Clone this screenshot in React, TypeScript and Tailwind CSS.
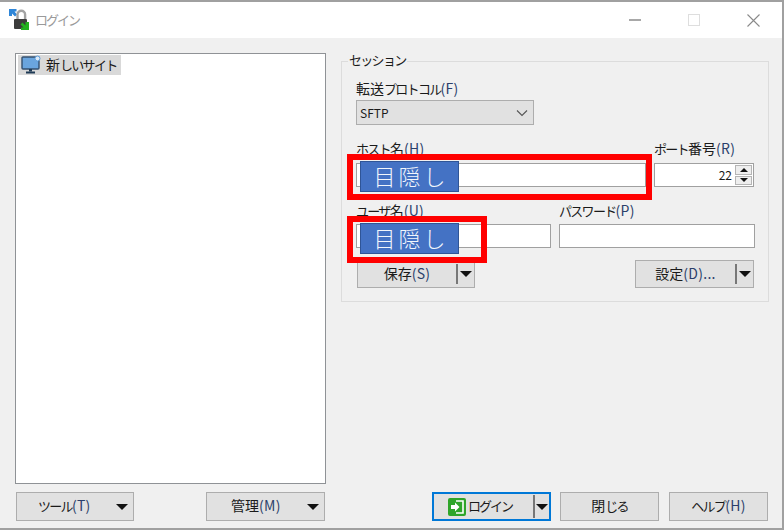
const FONT = "font-['Noto_Sans_CJK_JP','Noto_Sans',sans-serif]";

function Caret() {
  return <span className="block w-0 h-0 border-x-[6px] border-x-transparent border-t-[6px] border-t-[#111]" />;
}

function Hotkey({ children }: { children: string }) {
  return <span className="text-[14px] text-[#2b3f6b] tracking-[0.3px]">{children}</span>;
}

// kanji run wider than the kana around it
function K({ children }: { children: string }) {
  return <span className="text-[14px] tracking-normal">{children}</span>;
}

function Redacted() {
  return (
    <div className="w-[99px] h-[31px] bg-[#4472c4] border border-[#2f5597] text-[#f2f6fc] text-[22px] leading-[26px] tracking-[3px] pl-[3px] text-center font-light">
      目隠し
    </div>
  );
}

function LockIcon() {
  return (
    <svg width="22" height="22" viewBox="0 0 22 22">
      <path d="M0 0h7.500v2.500H5.500l2.500 3-2 2-3-3v2.500H0z" fill="#2f86d8" />
      <path d="M8.500 10V5.500a3.800 3.800 0 0 1 7.600 0V10" fill="none" stroke="#a3a3a3" strokeWidth="2.4" />
      <rect x="5" y="10" width="13" height="10" rx="1" fill="#3c3c3c" />
      <path d="M20 13v8h-8v-2.500h2.500l-3-3 2-2 3 3V13z" fill="#22b11f" />
    </svg>
  );
}

function SiteIcon() {
  return (
    <svg width="20" height="20" viewBox="0 0 20 20">
      <rect x="1" y="2" width="17" height="12" rx="1" fill="#6aa5de" stroke="#34506f" strokeWidth="1.4" />
      <circle cx="16.500" cy="3.500" r="2.500" fill="#dbe9f7" stroke="#5b9bd8" />
      <rect x="8" y="14" width="3" height="2.500" fill="#1f3a55" />
      <rect x="5" y="16.500" width="9" height="2" fill="#1f3a55" />
    </svg>
  );
}

function LoginIcon() {
  return (
    <svg width="18" height="18" viewBox="0 0 18 18">
      <rect width="18" height="18" rx="2" fill="#2ea52a" />
      <path d="M8 3h7v12H8" fill="none" stroke="#fff" strokeWidth="1.6" />
      <path d="M3 7h4V4.500L11.500 9 7 13.500V11H3z" fill="#fff" />
    </svg>
  );
}

function SplitButton({ label, hotkey, width }: { label: string; hotkey: string; width: string }) {
  return (
    <div className={`${width} h-[28px] flex bg-[#e1e1e1] border border-[#adadad]`}>
      <div className="flex-1 h-[26px] overflow-hidden text-center leading-[25px]">
        <K>{label}</K>
        <Hotkey>{hotkey}</Hotkey>
      </div>
      <div className="w-[18px] my-[3px] border-l-2 border-[#777] flex items-center justify-center">
        <Caret />
      </div>
    </div>
  );
}

export default function App() {
  return (
    <div className={`${FONT} w-[784px] h-[530px] flex flex-col bg-[#f0f0f0] border-t-2 border-r-2 border-b-2 border-[#a0a0a0] text-[13px] tracking-[-1.7px] text-[#1a1a1a] overflow-hidden`}>
      {/* title bar */}
      <div className="h-[36px] shrink-0 bg-white flex items-center pl-[9px]">
        <LockIcon />
        <span className="ml-[4px] text-[#9a9a9a] tracking-[-2px]">ログイン</span>
        <div className="ml-auto flex items-center">
          <div className="w-[12px] h-[1px] border-t-2 border-[#a8a8a8] mr-[47px]" />
          <div className="w-[12px] h-[12px] border border-[#dedede] mr-[47px]" />
          <svg width="13" height="13" viewBox="0 0 13 13" className="mr-[22px]">
            <path d="M.5.500l12 12M12.500.500l-12 12" stroke="#8a8a8a" strokeWidth="1.1" />
          </svg>
        </div>
      </div>

      <div className="flex-1 flex">
        {/* left pane */}
        <div className="w-[341px] shrink-0 pl-[15px] pr-[15px] pt-[15px] flex flex-col">
          <div className="h-[431px] bg-white border border-[#8f9296] pl-[2px] pt-[1px]">
            <div className="w-[103px] h-[20px] bg-[#d9d9d9] flex items-center gap-[5px] pl-[3px] whitespace-nowrap">
              <SiteIcon />
              <span className="leading-[18px] mb-[2px]"><K>新</K>しいサイト</span>
            </div>
          </div>
          <div className="mt-[8px] ml-[1px] mr-[1px] flex justify-between">
            <div className="w-[118px] h-[29px] flex items-center bg-[#e1e1e1] border border-[#adadad] pl-[21px]">
              <span className="mb-[2px]">
                ツール<Hotkey>(T)</Hotkey>
              </span>
              <span className="ml-auto mr-[5px]"><Caret /></span>
            </div>
            <div className="w-[119px] h-[29px] flex items-center bg-[#e1e1e1] border border-[#adadad] pl-[24px]">
              <span className="mb-[2px]">
                <K>管理</K><Hotkey>(M)</Hotkey>
              </span>
              <span className="ml-auto mr-[5px]"><Caret /></span>
            </div>
          </div>
        </div>

        {/* right pane */}
        <div className="flex-1 flex flex-col pr-[13px] pt-[23px]">
          <div className="relative h-[241px] border border-[#dcdcdc] pl-[14px]">
            <span className="absolute left-[6px] top-[-10px] bg-[#f0f0f0] leading-[16px] px-[1px]">セッション</span>
            <div className="mt-[17px] h-[18px] leading-[18px]">
              <K>転送</K>プロトコル<Hotkey>(F)</Hotkey>
            </div>
            <div className="mt-[3px] w-[178px] h-[25px] flex items-center justify-between bg-[#e1e1e1] border border-[#adadad] px-[3px] text-[12px] tracking-normal">
              <span>SFTP</span>
              <svg width="12" height="8" viewBox="0 0 12 8" className="mr-[2px]">
                <path d="M1 1.500l5 5 5-5" fill="none" stroke="#555" strokeWidth="1.1" />
              </svg>
            </div>

            <div className="mt-[14px] flex">
              <div className="relative w-[298px]">
                <div className="h-[18px] leading-[18px]">
                  ホスト<K>名</K><Hotkey>(H)</Hotkey>
                </div>
                <div className="mt-[6px] w-[290px] h-[24px] bg-white border border-[#a0a0a0]" />
                <div className="absolute left-[-9px] top-[15px] w-[305px] h-[46px] border-[6px] border-[#ff0000]" />
                <div className="absolute left-[4px] top-[22px]"><Redacted /></div>
              </div>
              <div>
                <div className="h-[18px] leading-[18px]">
                  ポート<K>番号</K><Hotkey>(R)</Hotkey>
                </div>
                <div className="mt-[6px] w-[100px] h-[24px] bg-white border border-[#a0a0a0] flex items-center justify-end">
                  <span className="text-[12px] tracking-normal mr-[3px]">22</span>
                  <div className="w-[17px] h-[20px] flex flex-col gap-[1px] mr-[1px]">
                    <div className="flex-1 bg-[#eeeeee] border border-[#b5b5b5] flex items-center justify-center">
                      <span className="block w-0 h-0 border-x-[4px] border-x-transparent border-b-[4px] border-b-[#111]" />
                    </div>
                    <div className="flex-1 bg-[#eeeeee] border border-[#b5b5b5] flex items-center justify-center">
                      <span className="block w-0 h-0 border-x-[4px] border-x-transparent border-t-[4px] border-t-[#111]" />
                    </div>
                  </div>
                </div>
              </div>
            </div>

            <div className="mt-[14px] flex">
              <div className="relative w-[203px]">
                <div className="h-[18px] leading-[18px]">
                  ユーザ<K>名</K><Hotkey>(U)</Hotkey>
                </div>
                <div className="mt-[5px] w-[195px] h-[24px] bg-white border border-[#a0a0a0]" />
                <div className="absolute left-[-9px] top-[15px] w-[140px] h-[47px] border-[6px] border-[#ff0000]" />
                <div className="absolute left-[4px] top-[22px]"><Redacted /></div>
              </div>
              <div>
                <div className="h-[18px] leading-[18px]">
                  パスワード<Hotkey>(P)</Hotkey>
                </div>
                <div className="mt-[5px] w-[196px] h-[24px] bg-white border border-[#a0a0a0]" />
              </div>
            </div>

            <div className="mt-[12px] ml-[1px] flex justify-between pr-[14px]">
              <SplitButton label="保存" hotkey="(S)" width="w-[118px]" />
              <SplitButton label="設定" hotkey="(D)..." width="w-[119px]" />
            </div>
          </div>

          <div className="mt-auto mb-[7px] mr-[1px] flex justify-end gap-[9px]">
            <div className="w-[119px] h-[29px] flex bg-[#e1e1e1] border-2 border-[#0078d7]">
              <div className="flex-1 flex items-center gap-[2px] pl-[14px]">
                <LoginIcon />
                <span className="mb-[2px] tracking-[-2px]">ログイン</span>
              </div>
              <div className="w-[16px] my-[1px] border-l-2 border-[#777] flex items-center justify-center">
                <Caret />
              </div>
            </div>
            <div className="w-[99px] h-[29px] bg-[#e1e1e1] border border-[#adadad] text-center leading-[25px]"><K>閉</K>じる</div>
            <div className="w-[99px] h-[29px] ml-[1px] bg-[#e1e1e1] border border-[#adadad] text-center leading-[25px]">
              ヘルプ<Hotkey>(H)</Hotkey>
            </div>
          </div>
        </div>
      </div>
    </div>
  );
}
